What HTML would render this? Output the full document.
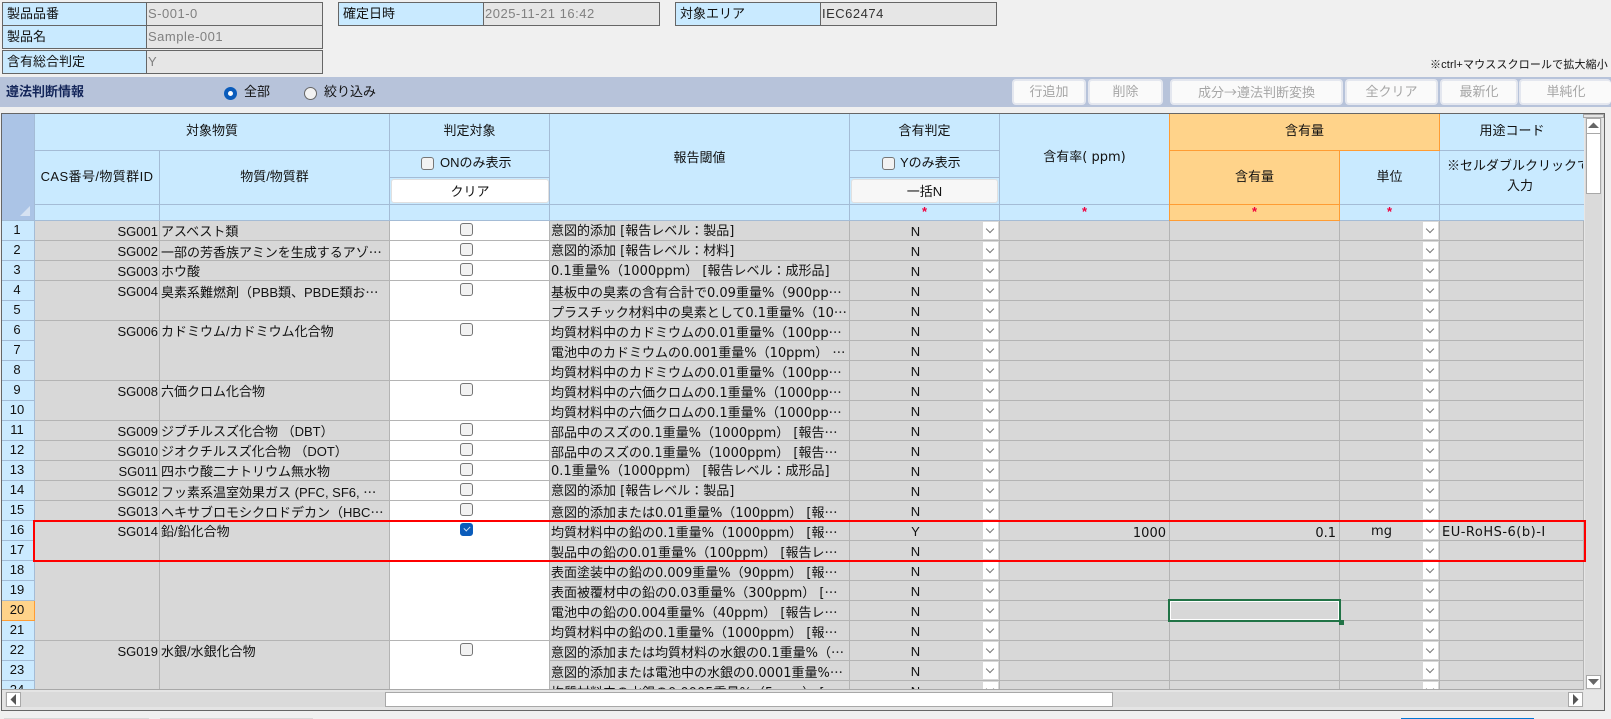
<!DOCTYPE html>
<html lang="ja"><head><meta charset="utf-8"><title>遵法判断情報</title>
<style>
html,body{margin:0;padding:0;width:1611px;height:719px;overflow:hidden;background:#f0f0f0}
body{position:relative;font:13px/20px "Liberation Sans","Noto Sans CJK JP",sans-serif;color:#111}
div{box-sizing:border-box}
.a{position:absolute}
.l,.v{position:absolute;height:24px;border:1px solid #666;line-height:21px;padding-left:4px;white-space:nowrap}
.l{background:#c9eaff}
.v{background:#e6e6e6;color:#808080;padding-left:1px;border-left:0;letter-spacing:.5px}
.btn{position:absolute;top:79px;height:26px;background:#fafafa;border:2px solid #e4e7ef;border-radius:4px;color:#a6a6a6;text-align:center;line-height:21px;overflow:hidden;white-space:nowrap}
.h{position:absolute;background:#c9eaff;border-right:1px solid #a4bcd6;border-bottom:1px solid #a4bcd6;display:flex;align-items:center;justify-content:center;white-space:nowrap;overflow:hidden;padding-bottom:2px}
.o{background:#ffd38a;border-color:#ff9c33}
.st{color:#f0003c;font-weight:bold;font-size:13px;line-height:14px}
.cb{position:absolute;width:13px;height:13px;background:#f2f2f2;border:1px solid #767676;border-radius:3px;box-sizing:border-box}
.hb{position:absolute;top:179px;height:24px;border-radius:3px;text-align:center;line-height:23px;border:1px solid #e0e0e0;box-sizing:border-box}
#g{position:absolute;left:2px;top:221px;width:1582px;height:468px;overflow:hidden}
table{border-collapse:separate;border-spacing:0;table-layout:fixed;width:1582px;position:absolute;left:0;top:0}
td{box-sizing:border-box;height:20px;padding:4px 0 0;border-right:1px solid #b4b4b4;border-bottom:1px solid #b4b4b4;background:#d8d8d8;white-space:nowrap;overflow:hidden;vertical-align:top;line-height:13px;position:relative}
td.n{background:#cbeaff;border-color:#a4bcd6;text-align:center;padding:1px 2px 0 0;line-height:15px}
td.s{background:#ffd38a;border-color:#ff9c33}
td.i{text-align:right;padding-right:1px}
td.t,td.r{padding-left:1px}
td.r{font-family:"DejaVu Sans","Noto Sans CJK JP",sans-serif}
td.j{text-align:center;padding-right:18px}
td.m{text-align:right;padding-right:3px;font-family:"DejaVu Sans",sans-serif;font-size:13px;padding-top:6px}
td.w{background:#fff}
td i{position:absolute;right:1px;top:1px;width:15px;height:17px;background:#fff}
td i:after{content:"";position:absolute;left:4px;top:4px;width:5px;height:5px;border-right:1px solid #777;border-bottom:1px solid #777;transform:rotate(45deg)}
td b{position:absolute;left:70px;top:2px;width:13px;height:13px;background:#f2f2f2;border:1px solid #767676;border-radius:3px;box-sizing:border-box}
td b.k{background:#0b5cbb;border-color:#0b5cbb}
td b.k:after{content:"";position:absolute;left:3px;top:2px;width:5px;height:3px;border-left:1px solid #cfe0f5;border-bottom:1px solid #cfe0f5;transform:rotate(-45deg)}
u{text-decoration:none;font-family:"Noto Sans CJK JP",sans-serif}
.sb{position:absolute;background:#fff;border:1px solid #a8a8a8;box-sizing:border-box}
</style></head><body>

<div class="l" style="left:2px;top:2px;width:145px">製品品番</div><div class="v" style="left:147px;top:2px;width:176px">S-001-0</div>
<div class="l" style="left:2px;top:25px;width:145px">製品名</div><div class="v" style="left:147px;top:25px;width:176px">Sample-001</div>
<div class="l" style="left:2px;top:50px;width:145px">含有総合判定</div><div class="v" style="left:147px;top:50px;width:176px">Y</div>
<div class="l" style="left:338px;top:2px;width:146px">確定日時</div><div class="v" style="left:484px;top:2px;width:176px">2025-11-21 16:42</div>
<div class="l" style="left:675px;top:2px;width:146px">対象エリア</div><div class="v" style="left:821px;top:2px;width:176px;color:#333">IEC62474</div>
<div class="a" style="left:1430px;top:55px;font-size:11px;white-space:nowrap;letter-spacing:.15px">※ctrl+マウススクロールで拡大縮小</div>

<div class="a" style="left:0;top:77px;width:1611px;height:30px;background:#b7c3da"></div>
<div class="a" style="left:6px;top:82px;font-weight:bold;color:#14265a">遵法判断情報</div>
<div class="a" style="left:224px;top:87px;width:13px;height:13px;border-radius:50%;background:#fff;border:4px solid #0b5cbb"></div>
<div class="a" style="left:244px;top:82px">全部</div>
<div class="a" style="left:304px;top:87px;width:13px;height:13px;border-radius:50%;background:#f2f2f2;border:1px solid #666"></div>
<div class="a" style="left:324px;top:82px">絞り込み</div>
<div class="btn" style="left:1012px;width:74px">行追加</div>
<div class="btn" style="left:1088px;width:75px">削除</div>
<div class="btn" style="left:1170px;width:173px">成分<u>→</u>遵法判断変換</div>
<div class="btn" style="left:1345px;width:93px">全クリア</div>
<div class="btn" style="left:1440px;width:78px">最新化</div>
<div class="btn" style="left:1519px;width:92px;border-right:0">単純化</div>

<div class="a" style="left:1px;top:113px;width:1604px;height:598px;border:1px solid #666;background:#e4e4e4"></div>

<div class="a" style="left:2px;top:114px;width:33px;height:107px;background:#abc4e6;border-right:1px solid #a4bcd6;border-bottom:1px solid #a4bcd6"></div>
<div class="a" style="left:20px;top:206px;width:0;height:0;border-left:10px solid transparent;border-bottom:10px solid #d6e2f2"></div>
<div class="h" style="left:35px;top:114px;width:355px;height:37px">対象物質</div>
<div class="h" style="left:35px;top:151px;width:125px;height:54px;letter-spacing:.4px">CAS番号/物質群ID</div>
<div class="h" style="left:160px;top:151px;width:230px;height:54px">物質/物質群</div>
<div class="h" style="left:390px;top:114px;width:160px;height:37px">判定対象</div>
<div class="h" style="left:390px;top:151px;width:160px;height:27px"></div>
<div class="h" style="left:390px;top:178px;width:160px;height:27px"></div>
<div class="h" style="left:550px;top:114px;width:300px;height:91px">報告閾値</div>
<div class="h" style="left:850px;top:114px;width:150px;height:37px">含有判定</div>
<div class="h" style="left:850px;top:151px;width:150px;height:27px"></div>
<div class="h" style="left:850px;top:178px;width:150px;height:27px"></div>
<div class="h" style="left:1000px;top:114px;width:170px;height:91px;font-family:'DejaVu Sans','Noto Sans CJK JP',sans-serif">含有率( ppm)</div>
<div class="h o" style="left:1170px;top:114px;width:270px;height:37px">含有量</div>
<div class="h o" style="left:1170px;top:151px;width:170px;height:54px">含有量</div>
<div class="h" style="left:1340px;top:151px;width:100px;height:54px">単位</div>
<div class="h" style="left:1440px;top:114px;width:144px;height:37px;border-right:0">用途コード</div>
<div class="h" style="left:1440px;top:151px;width:144px;height:54px;border-right:0"></div>
<div class="a" style="left:1447px;top:156px;width:136px;overflow:hidden;white-space:nowrap">※セルダブルクリックで</div>
<div class="a" style="left:1507px;top:176px">入力</div>

<div class="h" style="left:35px;top:205px;width:125px;height:16px"></div>
<div class="h" style="left:160px;top:205px;width:230px;height:16px"></div>
<div class="h" style="left:390px;top:205px;width:160px;height:16px"></div>
<div class="h" style="left:550px;top:205px;width:300px;height:16px"></div>
<div class="h st" style="left:850px;top:205px;width:150px;height:16px">*</div>
<div class="h st" style="left:1000px;top:205px;width:170px;height:16px">*</div>
<div class="h o st" style="left:1170px;top:205px;width:170px;height:16px">*</div>
<div class="h st" style="left:1340px;top:205px;width:100px;height:16px">*</div>
<div class="h" style="left:1440px;top:205px;width:144px;height:16px;border-right:0"></div>
<div class="a" style="left:1169px;top:114px;width:1px;height:107px;background:#ff9c33"></div>

<div class="cb" style="left:421px;top:157px"></div>
<div class="a" style="left:440px;top:153px;white-space:nowrap">ONのみ表示</div>
<div class="hb" style="left:391px;width:158px;background:#fff">クリア</div>
<div class="cb" style="left:882px;top:157px"></div>
<div class="a" style="left:900px;top:153px;white-space:nowrap">Yのみ表示</div>
<div class="hb" style="left:851px;width:147px;background:#f7f7f7">一括N</div>

<div id="g"><table>
<colgroup><col style="width:33px"><col style="width:125px"><col style="width:230px"><col style="width:160px"><col style="width:300px"><col style="width:150px"><col style="width:170px"><col style="width:170px"><col style="width:100px"><col style="width:144px"></colgroup>
<tr><td class="n">1</td><td class="i">SG001</td><td class="t">アスベスト類</td><td class="w"><b></b></td><td class="r">意図的添加 [報告レベル：製品]</td><td class="j">N<i></i></td><td></td><td></td><td><i></i></td><td></td></tr>
<tr><td class="n">2</td><td class="i">SG002</td><td class="t">一部の芳香族アミンを生成するアゾ<u>…</u></td><td class="w"><b></b></td><td class="r">意図的添加 [報告レベル：材料]</td><td class="j">N<i></i></td><td></td><td></td><td><i></i></td><td></td></tr>
<tr><td class="n">3</td><td class="i">SG003</td><td class="t">ホウ酸</td><td class="w"><b></b></td><td class="r">0.1重量%（1000ppm） [報告レベル：成形品]</td><td class="j">N<i></i></td><td></td><td></td><td><i></i></td><td></td></tr>
<tr><td class="n">4</td><td class="i" rowspan="2">SG004</td><td class="t" rowspan="2">臭素系難燃剤（PBB類、PBDE類お<u>…</u></td><td class="w" rowspan="2"><b></b></td><td class="r">基板中の臭素の含有合計で0.09重量%（900pp<u>…</u></td><td class="j">N<i></i></td><td></td><td></td><td><i></i></td><td></td></tr>
<tr><td class="n">5</td><td class="r">プラスチック材料中の臭素として0.1重量%（10<u>…</u></td><td class="j">N<i></i></td><td></td><td></td><td><i></i></td><td></td></tr>
<tr><td class="n">6</td><td class="i" rowspan="3">SG006</td><td class="t" rowspan="3">カドミウム/カドミウム化合物</td><td class="w" rowspan="3"><b></b></td><td class="r">均質材料中のカドミウムの0.01重量%（100pp<u>…</u></td><td class="j">N<i></i></td><td></td><td></td><td><i></i></td><td></td></tr>
<tr><td class="n">7</td><td class="r">電池中のカドミウムの0.001重量%（10ppm） <u>…</u></td><td class="j">N<i></i></td><td></td><td></td><td><i></i></td><td></td></tr>
<tr><td class="n">8</td><td class="r">均質材料中のカドミウムの0.01重量%（100pp<u>…</u></td><td class="j">N<i></i></td><td></td><td></td><td><i></i></td><td></td></tr>
<tr><td class="n">9</td><td class="i" rowspan="2">SG008</td><td class="t" rowspan="2">六価クロム化合物</td><td class="w" rowspan="2"><b></b></td><td class="r">均質材料中の六価クロムの0.1重量%（1000pp<u>…</u></td><td class="j">N<i></i></td><td></td><td></td><td><i></i></td><td></td></tr>
<tr><td class="n">10</td><td class="r">均質材料中の六価クロムの0.1重量%（1000pp<u>…</u></td><td class="j">N<i></i></td><td></td><td></td><td><i></i></td><td></td></tr>
<tr><td class="n">11</td><td class="i">SG009</td><td class="t">ジブチルスズ化合物 （DBT）</td><td class="w"><b></b></td><td class="r">部品中のスズの0.1重量%（1000ppm） [報告<u>…</u></td><td class="j">N<i></i></td><td></td><td></td><td><i></i></td><td></td></tr>
<tr><td class="n">12</td><td class="i">SG010</td><td class="t">ジオクチルスズ化合物 （DOT）</td><td class="w"><b></b></td><td class="r">部品中のスズの0.1重量%（1000ppm） [報告<u>…</u></td><td class="j">N<i></i></td><td></td><td></td><td><i></i></td><td></td></tr>
<tr><td class="n">13</td><td class="i">SG011</td><td class="t">四ホウ酸二ナトリウム無水物</td><td class="w"><b></b></td><td class="r">0.1重量%（1000ppm） [報告レベル：成形品]</td><td class="j">N<i></i></td><td></td><td></td><td><i></i></td><td></td></tr>
<tr><td class="n">14</td><td class="i">SG012</td><td class="t">フッ素系温室効果ガス (PFC, SF6, <u>…</u></td><td class="w"><b></b></td><td class="r">意図的添加 [報告レベル：製品]</td><td class="j">N<i></i></td><td></td><td></td><td><i></i></td><td></td></tr>
<tr><td class="n">15</td><td class="i">SG013</td><td class="t">ヘキサブロモシクロドデカン（HBC<u>…</u></td><td class="w"><b></b></td><td class="r">意図的添加または0.01重量%（100ppm） [報<u>…</u></td><td class="j">N<i></i></td><td></td><td></td><td><i></i></td><td></td></tr>
<tr><td class="n">16</td><td class="i" rowspan="6">SG014</td><td class="t" rowspan="6">鉛/鉛化合物</td><td class="w" rowspan="6"><b class="k"></b></td><td class="r">均質材料中の鉛の0.1重量%（1000ppm） [報<u>…</u></td><td class="j">Y<i></i></td><td class="m">1000</td><td class="m">0.1</td><td style="text-align:center;padding-right:16px;padding-top:4px;font-family:'DejaVu Sans',sans-serif">mg<i></i></td><td style="padding-left:2px;padding-top:5px;letter-spacing:.5px;font-family:'DejaVu Sans',sans-serif">EU-RoHS-6(b)-I</td></tr>
<tr><td class="n">17</td><td class="r">製品中の鉛の0.01重量%（100ppm） [報告レ<u>…</u></td><td class="j">N<i></i></td><td></td><td></td><td><i></i></td><td></td></tr>
<tr><td class="n">18</td><td class="r">表面塗装中の鉛の0.009重量%（90ppm） [報<u>…</u></td><td class="j">N<i></i></td><td></td><td></td><td><i></i></td><td></td></tr>
<tr><td class="n">19</td><td class="r">表面被覆材中の鉛の0.03重量%（300ppm） [<u>…</u></td><td class="j">N<i></i></td><td></td><td></td><td><i></i></td><td></td></tr>
<tr><td class="n s">20</td><td class="r">電池中の鉛の0.004重量%（40ppm） [報告レ<u>…</u></td><td class="j">N<i></i></td><td></td><td></td><td><i></i></td><td></td></tr>
<tr><td class="n">21</td><td class="r">均質材料中の鉛の0.1重量%（1000ppm） [報<u>…</u></td><td class="j">N<i></i></td><td></td><td></td><td><i></i></td><td></td></tr>
<tr><td class="n">22</td><td class="i" rowspan="3">SG019</td><td class="t" rowspan="3">水銀/水銀化合物</td><td class="w" rowspan="3"><b></b></td><td class="r">意図的添加または均質材料の水銀の0.1重量%（<u>…</u></td><td class="j">N<i></i></td><td></td><td></td><td><i></i></td><td></td></tr>
<tr><td class="n">23</td><td class="r">意図的添加または電池中の水銀の0.0001重量%<u>…</u></td><td class="j">N<i></i></td><td></td><td></td><td><i></i></td><td></td></tr>
<tr><td class="n">24</td><td class="r">均質材料中の水銀の0.0005重量%（5ppm） [<u>…</u></td><td class="j">N<i></i></td><td></td><td></td><td><i></i></td><td></td></tr>
</table></div>

<div class="a" style="left:2px;top:689px;width:1582px;height:1px;background:#a8a8a8"></div>
<div class="a" style="left:5px;top:692px;width:1578px;height:15px;background:#dadada"></div>
<div class="a" style="left:1584px;top:114px;width:20px;height:596px;background:#e6e6e6"></div>
<div class="a" style="left:1585px;top:117px;width:17px;height:573px;background:#dadada"></div>
<div class="a" style="left:1583px;top:114px;width:21px;height:4px;background:#e4e4e4;border:1px solid #a8a8a8"></div>
<div class="sb" style="left:1586px;top:118px;width:15px;height:16px"><svg width="13" height="14" style="display:block"><path d="M1 9 L6.5 3.5 L12 9Z" fill="#666"/></svg></div>
<div class="sb" style="left:1586px;top:133px;width:15px;height:61px"></div>
<div class="sb" style="left:1586px;top:675px;width:15px;height:14px"><svg width="13" height="12" style="display:block"><path d="M1 3 L6.5 9 L12 3Z" fill="#666"/></svg></div>
<div class="sb" style="left:6px;top:692px;width:15px;height:15px"><svg width="13" height="13" style="display:block"><path d="M9 1 L3.5 6.5 L9 12Z" fill="#555"/></svg></div>
<div class="sb" style="left:385px;top:692px;width:728px;height:15px"></div>
<div class="sb" style="left:1568px;top:692px;width:15px;height:15px"><svg width="13" height="13" style="display:block"><path d="M4 1 L9.5 6.5 L4 12Z" fill="#555"/></svg></div>

<div class="a" style="left:33px;top:520px;width:1553px;height:42px;border:2px solid #f00"></div>
<div class="a" style="left:1168px;top:599px;width:173px;height:23px;border:2px solid #217346;outline:1px solid #fff;outline-offset:-3px"></div>
<div class="a" style="left:1339px;top:620px;width:5px;height:5px;background:#217346"></div>

<div class="a" style="left:4px;top:718px;width:145px;height:1px;background:#d8d8d8"></div>
<div class="a" style="left:160px;top:718px;width:153px;height:1px;background:#d8d8d8"></div>
<div class="a" style="left:1401px;top:718px;width:133px;height:1px;background:#0078d4"></div>
</body></html>
